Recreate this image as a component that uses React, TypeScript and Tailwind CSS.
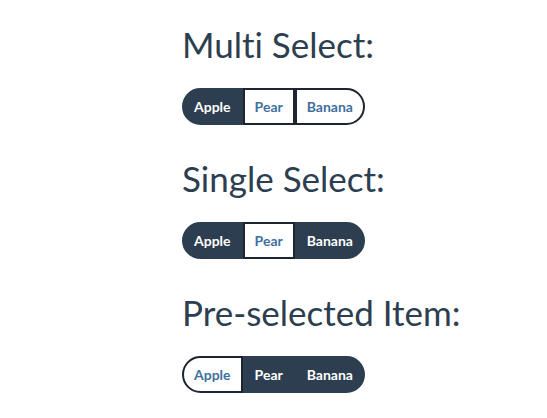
import React, { useState } from 'react';

const FRUITS = ['Apple', 'Pear', 'Banana'];

interface GroupProps {
  multi?: boolean;
  initial: string[];
}

const ButtonGroup: React.FC<GroupProps> = ({ multi, initial }) => {
  const [selected, setSelected] = useState<string[]>(initial);

  const toggle = (f: string) => {
    if (multi) {
      setSelected((s) => (s.includes(f) ? s.filter((x) => x !== f) : [...s, f]));
    } else {
      setSelected([f]);
    }
  };

  return (
    <div className="flex">
      {FRUITS.map((f, i) => {
        const on = selected.includes(f);
        return (
          <button
            key={f}
            onClick={() => toggle(f)}
            className={
              'h-[37px] px-[10px] border-2 text-[14px] font-bold ' +
              (i === 0 ? 'rounded-l-[19px] ' : '') +
              (i === FRUITS.length - 1 ? 'rounded-r-[19px] ' : '') +
              (on
                ? 'bg-[#2c3e50] border-[#2c3e50] text-white'
                : 'bg-white border-[#1c2530] text-[#40709f]')
            }
          >
            {f}
          </button>
        );
      })}
    </div>
  );
};

export default function App() {
  return (
    <div
      className="min-h-[418px] bg-white pl-[182px] pt-[22px] text-[#2c3e50] [font-variant-ligatures:none]"
      style={{ fontFamily: 'Lato, "Liberation Sans", sans-serif' }}
    >
      <section className="flex flex-col">
        <h2 className="text-[35px] leading-[44px]">Multi Select:</h2>
        <div className="mt-[22px]">
          <ButtonGroup multi initial={['Apple']} />
        </div>
      </section>
      <section className="flex flex-col mt-[31px]">
        <h2 className="text-[35px] leading-[44px]">Single Select:</h2>
        <div className="mt-[22px]">
          <ButtonGroup initial={['Apple', 'Banana']} />
        </div>
      </section>
      <section className="flex flex-col mt-[31px]">
        <h2 className="text-[35px] leading-[44px]">Pre-selected Item:</h2>
        <div className="mt-[22px]">
          <ButtonGroup initial={['Pear', 'Banana']} />
        </div>
      </section>
    </div>
  );
}
